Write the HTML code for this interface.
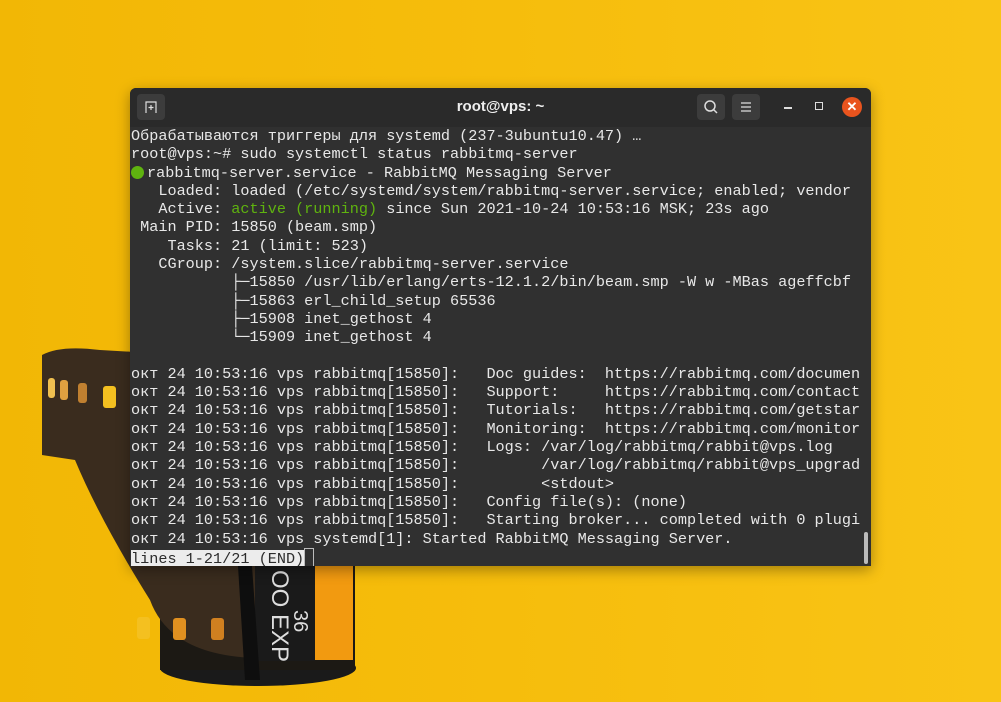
<!DOCTYPE html>
<html><head><meta charset="utf-8"><style>
html,body{margin:0;padding:0;width:1001px;height:702px;overflow:hidden}
body{background:linear-gradient(90deg,#f2b705 0%,#f6bd0c 50%,#f9c416 100%);position:relative;font-family:"Liberation Mono","Noto Sans CJK SC",monospace}
#bg{position:absolute;left:0;top:0}
.win{position:absolute;left:130px;top:88px;width:741px;height:478px;background:#303030;border-radius:6px 6px 0 0;overflow:hidden;box-shadow:0 4px 14px rgba(0,0,0,.35)}
.tb{height:39px;background:#2a2a2a;position:relative}
.title{position:absolute;left:0;right:0;top:10px;text-align:center;color:#eee;font:bold 15px "Liberation Sans",sans-serif}
.btn{position:absolute;top:6px;width:28px;height:26px;background:#3c3c3c;border-radius:4px}
pre{margin:0;padding:0 0 0 1px;color:#e8e8e8;font-size:15.2px;line-height:18.3px;font-family:"Liberation Mono","Noto Sans CJK SC",monospace;white-space:pre}
.g{color:#5fb30f}
.inv{background:#ececec;color:#2c2c2c}
.dot{display:inline-block;width:13px;height:13px;border-radius:50%;background:#5fb30f;vertical-align:-2px;margin-right:3px}
</style></head><body>
<svg id="bg" width="1001" height="702">
<ellipse cx="258" cy="668" rx="98" ry="18" fill="#1a1a1a"/>
<rect x="160" y="560" width="195" height="110" fill="#1c1914"/>
<rect x="315" y="560" width="38" height="100" fill="#f29a10"/>
<path d="M42 355 Q60 345 100 350 L135 352 L135 560 L255 560 L255 658 Q170 655 150 600 Q100 520 75 460 L42 455 Z" fill="#3a2c1e"/>
<rect x="48" y="378" width="7" height="20" rx="3" fill="#f0c050"/>
<rect x="60" y="380" width="8" height="20" rx="3" fill="#e0a040"/>
<rect x="78" y="383" width="9" height="20" rx="3" fill="#c08030"/>
<rect x="103" y="386" width="13" height="22" rx="3" fill="#f4c020"/>
<rect x="137" y="617" width="13" height="22" rx="3" fill="#f4c020"/>
<rect x="173" y="618" width="13" height="22" rx="3" fill="#e09020"/>
<rect x="211" y="618" width="13" height="22" rx="3" fill="#d08020"/>
<rect x="255" y="566" width="60" height="95" fill="#1a1a1a"/>
<path d="M238 566 L245 680 L260 680 L252 566Z" fill="#0e0e0e"/>
<text x="0" y="0" transform="translate(272,570) rotate(90)" fill="#ddd" font-family="Liberation Sans" font-size="24">OO EXP</text>
<text x="0" y="0" transform="translate(294,610) rotate(90)" fill="#ddd" font-family="Liberation Sans" font-size="20">36</text>
</svg>
<div class="win">
<div class="tb">
<div class="btn" style="left:7px"><svg width="28" height="26"><path d="M9 19V8h10v11M14 11v5M11.5 13.5h5" stroke="#ddd" stroke-width="1.2" fill="none"/></svg></div>
<div class="title">root@vps: ~</div>
<div class="btn" style="left:567px"><svg width="28" height="26"><circle cx="13" cy="12" r="5" stroke="#ddd" stroke-width="1.5" fill="none"/><path d="M16.5 15.5l3.5 3.5" stroke="#ddd" stroke-width="1.5"/></svg></div>
<div class="btn" style="left:602px"><svg width="28" height="26"><path d="M9 9h10M9 13h10M9 17h10" stroke="#ddd" stroke-width="1.3"/></svg></div>
<div style="position:absolute;left:654px;top:19px;width:8px;height:1.5px;background:#ddd"></div>
<div style="position:absolute;left:685px;top:14px;width:6px;height:6px;border:1.3px solid #ddd"></div>
<div style="position:absolute;left:712px;top:9px;width:20px;height:20px;border-radius:50%;background:#e9541e;color:#fff;font:bold 13px 'Liberation Sans',sans-serif;text-align:center;line-height:20px">✕</div>
</div>
<pre>Обрабатываются триггеры для systemd (237-3ubuntu10.47) …
root@vps:~# sudo systemctl status rabbitmq-server
<span class="dot"></span>rabbitmq-server.service - RabbitMQ Messaging Server
   Loaded: loaded (/etc/systemd/system/rabbitmq-server.service; enabled; vendor
   Active: <span class="g">active (running)</span> since Sun 2021-10-24 10:53:16 MSK; 23s ago
 Main PID: 15850 (beam.smp)
    Tasks: 21 (limit: 523)
   CGroup: /system.slice/rabbitmq-server.service
           ├─15850 /usr/lib/erlang/erts-12.1.2/bin/beam.smp -W w -MBas ageffcbf
           ├─15863 erl_child_setup 65536
           ├─15908 inet_gethost 4
           └─15909 inet_gethost 4

окт 24 10:53:16 vps rabbitmq[15850]:   Doc guides:  https://rabbitmq.com/documen
окт 24 10:53:16 vps rabbitmq[15850]:   Support:     https://rabbitmq.com/contact
окт 24 10:53:16 vps rabbitmq[15850]:   Tutorials:   https://rabbitmq.com/getstar
окт 24 10:53:16 vps rabbitmq[15850]:   Monitoring:  https://rabbitmq.com/monitor
окт 24 10:53:16 vps rabbitmq[15850]:   Logs: /var/log/rabbitmq/rabbit@vps.log
окт 24 10:53:16 vps rabbitmq[15850]:         /var/log/rabbitmq/rabbit@vps_upgrad
окт 24 10:53:16 vps rabbitmq[15850]:         &lt;stdout&gt;
окт 24 10:53:16 vps rabbitmq[15850]:   Config file(s): (none)
окт 24 10:53:16 vps rabbitmq[15850]:   Starting broker... completed with 0 plugi
окт 24 10:53:16 vps systemd[1]: Started RabbitMQ Messaging Server.
<span class="inv">lines 1-21/21 (END)</span><span style="display:inline-block;width:8px;height:17px;border:1px solid #bbb;vertical-align:-4px"></span></pre>
<div style="position:absolute;left:734px;top:444px;width:4px;height:32px;background:#bbb;border-radius:2px"></div>
</div>
</body></html>
